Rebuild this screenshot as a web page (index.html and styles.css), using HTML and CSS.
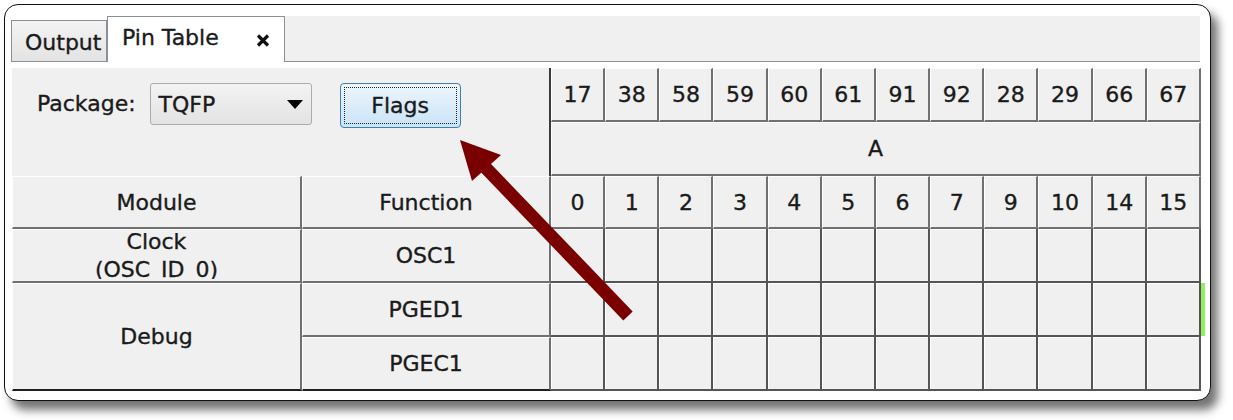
FILE: index.html
```html
<!DOCTYPE html>
<html>
<head>
<meta charset="utf-8">
<link rel="stylesheet" href="styles.css">
</head>
<body>
<div class="window">
  <div class="tabs">
    <div class="tab tab-off">Output</div>
    <div class="tab tab-on">
      <span>Pin Table</span>
      <svg class="close" width="14" height="13" viewBox="0 0 14 13"><path d="M2 1.5 L12 11.5 M12 1.5 L2 11.5" stroke="#111" stroke-width="3.2" stroke-linecap="butt"/></svg>
    </div>
    <div class="tab-fill"></div>
  </div>
  <div class="pane">
    <div class="grid">
      <div class="opts">
        <span class="lbl">Package:</span>
        <div class="select"><span>TQFP</span><i class="caret"></i></div>
        <div class="btn"><div class="focus">Flags</div></div>
      </div>

      <div class="h r1">17</div><div class="h r1">38</div><div class="h r1">58</div><div class="h r1">59</div>
      <div class="h r1">60</div><div class="h r1">61</div><div class="h r1">91</div><div class="h r1">92</div>
      <div class="h r1">28</div><div class="h r1">29</div><div class="h r1">66</div><div class="h r1">67</div>

      <div class="h port">A</div>

      <div class="h c1 r3">Module</div>
      <div class="h c2 r3">Function</div>
      <div class="h r3">0</div><div class="h r3">1</div><div class="h r3">2</div><div class="h r3">3</div>
      <div class="h r3">4</div><div class="h r3">5</div><div class="h r3">6</div><div class="h r3">7</div>
      <div class="h r3">9</div><div class="h r3">10</div><div class="h r3">14</div><div class="h r3">15</div>

      <div class="h c1 r4 clock"><div class="clip"><span>Clock</span><span>(OSC_ID_0)</span></div></div>
      <div class="h c2 r4">OSC1</div>
      <div class="d r4"></div><div class="d r4"></div><div class="d r4"></div><div class="d r4"></div>
      <div class="d r4"></div><div class="d r4"></div><div class="d r4"></div><div class="d r4"></div>
      <div class="d r4"></div><div class="d r4"></div><div class="d r4"></div><div class="d r4"></div>

      <div class="h c1 debug last">Debug</div>
      <div class="h c2 r5">PGED1</div>
      <div class="d r5"></div><div class="d r5"></div><div class="d r5"></div><div class="d r5"></div>
      <div class="d r5"></div><div class="d r5"></div><div class="d r5"></div><div class="d r5"></div>
      <div class="d r5"></div><div class="d r5"></div><div class="d r5"></div><div class="d r5"></div>
      <div class="green"></div>

      <div class="h c2 r6 last">PGEC1</div>
      <div class="d r6"></div><div class="d r6"></div><div class="d r6"></div><div class="d r6"></div>
      <div class="d r6"></div><div class="d r6"></div><div class="d r6"></div><div class="d r6"></div>
      <div class="d r6"></div><div class="d r6"></div><div class="d r6"></div><div class="d r6"></div>
    </div>
  </div>
</div>
<svg class="arrow" width="1233" height="420" viewBox="0 0 1233 420">
  <line x1="628" y1="316" x2="483" y2="165" stroke="#7a0000" stroke-width="13" stroke-linecap="butt"/>
  <polygon points="460,140 501,155 472,181" fill="#7a0000"/>
</svg>
</body>
</html>
```

FILE: styles.css
```css
* { box-sizing: border-box; }

body {
  margin: 0;
  background: #fff;
  font-family: "DejaVu Sans", "Liberation Sans", sans-serif;
  font-size: 22px;
  color: #1a1a1a;
  -webkit-text-stroke: 0.35px #1a1a1a;
  width: 1233px;
  height: 420px;
  overflow: hidden;
}

.window {
  margin: 4px 0 0 4px;
  width: 1207px;
  height: 397px;
  border: 1px solid #111;
  border-radius: 14px;
  background: #fff;
  box-shadow: 7px 9px 10px rgba(0, 0, 0, 0.55);
  overflow: hidden;
}

.tabs {
  display: flex;
  align-items: flex-end;
  margin: 11px 0 0 6px;
  width: 1189px;
  height: 46px;
}

.tab {
  border: 1px solid #8d9099;
  border-bottom: none;
  white-space: nowrap;
}

.tab-off {
  width: 96px;
  height: 42px;
  padding: 4px 0 0 13px;
  line-height: 36px;
  background: linear-gradient(#f4f4f4, #e3e3e3);
  border-bottom: 1px solid #8d9099;
}

.tab-on {
  width: 178px;
  height: 46px;
  background: #fff;
  display: flex;
  align-items: center;
  padding: 0 14px 4px 14px;
  line-height: 40px;
}

.tab-on .close {
  margin-left: auto;
  margin-top: 6px;
}

.tab-fill {
  flex: 1;
  height: 46px;
  background: #f0f0f0;
  border-bottom: 1px solid #8d9099;
}

.pane {
  padding: 6px 0 0 7px;
}

.grid {
  display: grid;
  grid-template-columns: 290px 249px repeat(12, 54.17px) 4px;
  grid-template-rows: 54px 54px 53px 54px 54px 54px;
}

.opts {
  grid-column: 1 / 3;
  grid-row: 1 / 3;
  background: #f0f0f0;
  border-right: 2px solid #3a3a3a;
  display: flex;
  align-items: flex-start;
  padding: 15px 0 0 25px;
}

.lbl {
  line-height: 42px;
}

.select {
  margin-left: 14px;
  width: 162px;
  height: 42px;
  border: 1px solid #acacac;
  border-radius: 3px;
  background: linear-gradient(#f3f3f3, #e3e3e3);
  display: flex;
  align-items: center;
  padding: 0 8px 0 8px;
}

.caret {
  margin-left: auto;
  width: 0;
  height: 0;
  border-left: 8.5px solid transparent;
  border-right: 8.5px solid transparent;
  border-top: 9px solid #000;
}

.btn {
  margin-left: 28px;
  width: 121px;
  height: 45px;
  border: 1px solid #3c7fb1;
  border-radius: 4px;
  background: linear-gradient(#ecf6fc, #dcecfa 50%, #c9e4f7);
  padding: 3px;
}

.focus {
  height: 100%;
  border: 1px dotted #222;
  display: flex;
  align-items: center;
  justify-content: center;
}

.h {
  background: #f0f0f0;
  border-top: 1px solid #fff;
  border-left: 1px solid #fff;
  border-right: 2px solid #707070;
  border-bottom: 2px solid #707070;
  display: flex;
  align-items: center;
  justify-content: center;
  white-space: nowrap;
  overflow: hidden;
}

.d {
  background: #f0f0f0;
  border-right: 2px solid #555;
  border-bottom: 2px solid #555;
  box-shadow: inset 1px 1px 0 #fff;
}

.r1 { grid-row: 1; }
.r3 { grid-row: 3; }
.r4 { grid-row: 4; }
.r5 { grid-row: 5; }
.r6 { grid-row: 6; }
.c1 { grid-column: 1; }
.c2 { grid-column: 2; }

.port {
  grid-row: 2;
  grid-column: 3 / 15;
}

.clock {
  align-items: flex-start;
}

.clip {
  margin-top: 3px;
  height: 46px;
  overflow: hidden;
  display: flex;
  flex-direction: column;
  justify-content: center;
  align-items: center;
  line-height: 28px;
}

.clip span {
  flex: none;
}

.debug {
  grid-row: 5 / 7;
}

.last {
  border-bottom: 2px solid #1e1e1e;
}

.green {
  grid-row: 5;
  grid-column: 15;
  background: #8ff05c;
  margin-bottom: 1px;
}

.arrow {
  position: absolute;
  left: 0;
  top: 0;
  pointer-events: none;
}
```
